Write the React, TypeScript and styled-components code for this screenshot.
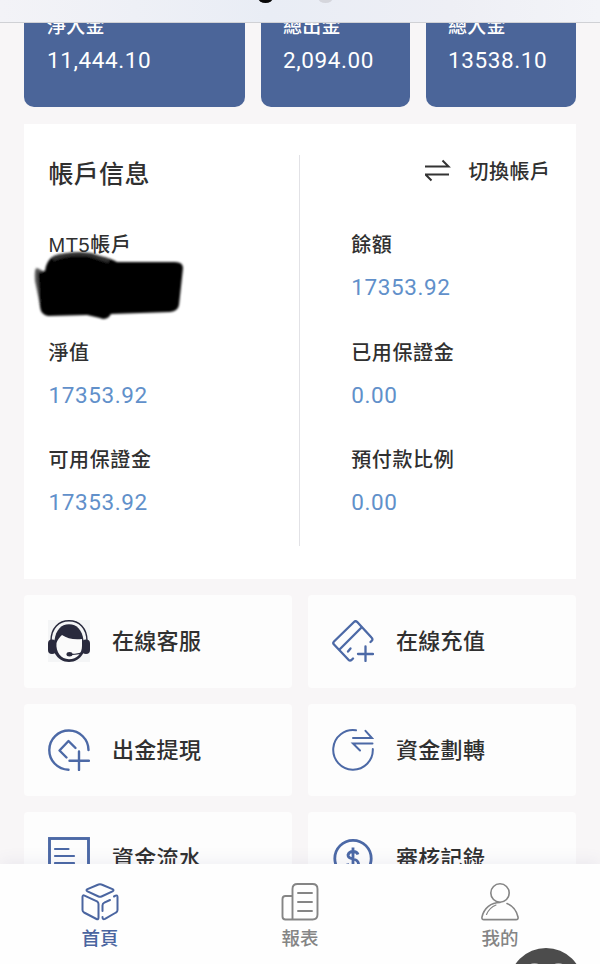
import React from "react";
import styled, { createGlobalStyle } from "styled-components";

const BLUE = "#4b6599";

const GlobalStyle = createGlobalStyle`
  * { box-sizing: border-box; }
  body { margin: 0; }
`;

const Screen = styled.div`
  width: 600px;
  height: 964px;
  display: flex;
  flex-direction: column;
  overflow: hidden;
  position: relative;
  background: #f8f6f7;
  color: #303030;
  font-family: "Liberation Sans", "Noto Sans CJK TC", sans-serif;
`;

const TopBar = styled.header`
  flex: 0 0 22.5px;
  display: flex;
  gap: 45px;
  padding-left: 258px;
  overflow: hidden;
  background: linear-gradient(90deg, #f3f3f7, #e9edf5 45%, #eeeff5 75%, #f3f4f8);
  border-bottom: 1px solid #d0d1d5;
`;

const TitleTail = styled.span<{ $color: string }>`
  width: 15px;
  height: 11px;
  margin-top: -8.5px;
  border-radius: 50%;
  background: ${(p) => p.$color};
`;

const Content = styled.main`
  flex: 1;
  min-height: 0;
  overflow: hidden;
  padding: 0 24px;
`;

const Stats = styled.section`
  display: grid;
  grid-template-columns: 221px 149px 150px;
  gap: 16px;
  height: 104px;
  margin-top: -19.5px;
  margin-bottom: 17px;
`;

const StatCard = styled.div`
  padding: 10px 0 0 23px;
  border-radius: 10px;
  background: ${BLUE};
  color: #fff;

  & + & {
    padding-left: 22px;
  }
`;

const StatLabel = styled.div`
  font-size: 19px;
  line-height: 28px;
  font-weight: 500;
  letter-spacing: 0.2px;
`;

const Amount = styled.div`
  font-family: Roboto, sans-serif;
  font-size: 22.5px;
  letter-spacing: 0.6px;
`;

const StatValue = styled(Amount)`
  margin-top: 5px;
  line-height: 28px;
`;

const Account = styled.section`
  display: flex;
  height: 455px;
  padding-top: 31px;
  background: #fff;
`;

const AccountColumn = styled.div<{ $side: "left" | "right" }>`
  width: ${(p) => (p.$side === "left" ? "275px" : "276px")};
  padding-left: ${(p) => (p.$side === "left" ? "24.5px" : "51px")};
`;

const Divider = styled.div`
  flex: 0 0 1.5px;
  height: 391px;
  background: #e2e2e6;
`;

const AccountTitle = styled.h1`
  margin: 0 0 36px;
  height: 37px;
  font-size: 25px;
  line-height: 38px;
  font-weight: 500;
  letter-spacing: 0.3px;
`;

const SwitchButton = styled.button`
  display: flex;
  align-items: center;
  justify-content: flex-end;
  gap: 18px;
  width: 100%;
  height: 30px;
  margin-bottom: 43px;
  padding: 0 25.5px 0 0;
  border: 0;
  background: none;
  color: inherit;
  font: inherit;
  font-size: 20px;
  font-weight: 500;
  letter-spacing: 0.5px;
`;

const Field = styled.div`
  position: relative;
  height: 107.5px;
`;

const FieldLabel = styled.div`
  font-size: 20px;
  line-height: 34px;
  font-weight: 500;
  letter-spacing: 0.6px;
`;

const FieldValue = styled(Amount)`
  margin-top: 9px;
  line-height: 32px;
  color: #6190ca;
`;

const Redaction = styled.svg`
  position: absolute;
  left: -24px;
  top: 21px;
  width: 160px;
  height: 76px;
  overflow: visible;
`;

const Menu = styled.section`
  display: grid;
  grid-template-columns: 1fr 1fr;
  grid-auto-rows: 92.5px;
  gap: 16px;
  margin-top: 16px;
`;

const MenuItem = styled.div`
  display: flex;
  align-items: center;
  gap: 22px;
  padding-left: 24px;
  border-radius: 4px;
  background: #fdfdfd;

  svg {
    flex: none;
  }
`;

const MenuLabel = styled.span`
  margin-bottom: 4px;
  font-size: 22px;
  font-weight: 500;
  letter-spacing: 0.3px;
`;

const Nav = styled.nav`
  flex: 0 0 100px;
  display: grid;
  grid-template-columns: repeat(3, 1fr);
  position: relative;
  background: #fefefe;
  box-shadow: 0 -4px 14px rgba(80, 90, 140, 0.07);
`;

const NavItem = styled.div<{ $active?: boolean }>`
  display: flex;
  flex-direction: column;
  align-items: center;
  padding-top: 18px;
  color: ${(p) => (p.$active ? "#4a65a0" : "#858585")};
  font-size: 18.5px;
  line-height: 28px;
  font-weight: 500;

  svg {
    margin-bottom: 3px;
  }
`;

const FloatingButton = styled.div`
  position: absolute;
  left: 509px;
  top: 948px;
  width: 74px;
  height: 74px;
  display: flex;
  justify-content: center;
  gap: 15px;
  padding-top: 15px;
  border-radius: 50%;
  background: #4c4c4c;
`;

const Glint = styled.span`
  width: 9px;
  height: 5px;
  border-radius: 50% 50% 0 0;
  background: #a5a5a5;
`;

const SwapIcon = () => (
  <svg width="26" height="24" viewBox="0 0 26 24" fill="none" stroke="#333" strokeWidth="2">
    <path d="M0 8.500H23.500L17.500 2.500M24 16.500H.5L6.500 22.500" />
  </svg>
);

const SupportIcon = () => (
  <svg width="42" height="42" viewBox="0 0 42 42">
    <rect width="42" height="42" fill="#f4f5f6" />
    <path d="M3 21C3 8 11 .8 21 .8S39 8 39 21" fill="none" stroke="#292a3d" strokeWidth="1.5" />
    <path d="M6.500 20C8 10 13 4.200 21 4.200S34 10 35.500 20v13C32 39 27 42 21 42S10 39 6.500 33Z" fill="#292a3d" />
    <path d="M8.500 23c1-3.500 3-5.500 5.500-8 5 3.500 12 5 20 4V26c0 7.500-5 13.200-13 13.200S7.500 32 8.500 23Z" fill="#fafafa" />
    <rect x="0" y="19.5" width="8" height="14.5" rx="4" fill="#292a3d" />
    <rect x="34" y="19.5" width="8" height="14.5" rx="4" fill="#292a3d" />
    <path d="M38 31c-4 2.500-9 3.500-16 3.500" fill="none" stroke="#292a3d" strokeWidth="1.3" />
    <ellipse cx="21.5" cy="34.300" rx="3" ry="2.200" fill="#292a3d" />
  </svg>
);

const DepositIcon = () => (
  <svg width="42" height="42" viewBox="0 0 42 42" fill="none" stroke="#4c69a6" strokeWidth="2.3" strokeLinecap="round" strokeLinejoin="round">
    <path d="M38.500 22L40 20.500Q41 19 39.500 17.500L25 1.800Q23.500 .5 22 2L2 21.500Q.5 23 2 24.500L16.500 39.800Q18 41 19.500 40L21 38.500" />
    <path d="M7.500 29.500L29 8M16 31.500L18.500 28.500" />
    <path d="M33.500 26.500V41M26 34H41" />
  </svg>
);

const WithdrawIcon = () => (
  <svg width="42" height="42" viewBox="0 0 42 42" fill="none" stroke="#4c69a6" strokeWidth="2.4" strokeLinecap="round" strokeLinejoin="round">
    <path d="M40.500 21A19.600 19.600 0 1 0 20.500 40.700" />
    <path d="M27.500 19L20.500 12 11.500 21.500 18.500 28.500" />
    <path d="M31 22.500V41M21.500 31.800H41" />
  </svg>
);

const TransferIcon = () => (
  <svg width="42" height="42" viewBox="0 0 42 42" fill="none" stroke="#4c69a6" strokeWidth="2" strokeLinecap="round">
    <path d="M24 1.300A19.800 19.800 0 1 0 40.800 20" />
    <path d="M21 9H40L33.500 1.800M40.500 14.500H21L28 21.500" />
  </svg>
);

const FlowIcon = () => (
  <svg width="42" height="42" viewBox="0 0 42 42" fill="none" stroke="#4c69a6" strokeWidth="2.9">
    <rect x="1.500" y="1.500" width="39" height="39" />
    <path d="M7 12H20.500M7 19H26M7 26H26M7 33H20" strokeLinecap="round" strokeWidth="2.2" />
  </svg>
);

const ReviewIcon = () => (
  <svg width="42" height="42" viewBox="0 0 42 42" fill="none" stroke="#4c69a6" strokeWidth="2.8">
    <circle cx="21" cy="21.500" r="18.200" />
    <path d="M26 17.500Q25 14.500 21 14.500T16 18Q16 21 21 22T26.500 26.500Q26 30 21 30T15.500 26.500M21 10.500V34" strokeWidth="2.8" />
  </svg>
);

const HomeIcon = () => (
  <svg width="38" height="40" viewBox="0 0 38 40" fill="none" stroke="currentColor" strokeWidth="2" strokeLinecap="round" strokeLinejoin="round">
    <path d="M17.500 2.500Q19 1.800 20.500 2.500L31.500 7.200Q33.500 8.200 31.500 9.400L20.500 14.500Q19 15.200 17.500 14.500L6.500 9.400Q4.500 8.200 6.500 7.200Z" />
    <path d="M3.500 13.600L16 19.300Q17.500 20.200 17.500 22V35.500Q17.500 38 15.500 37L3 30.500Q1.500 29.500 1.500 28V15Q1.500 12.700 3.500 13.600Z" />
    <path d="M33 14.500L34.500 13.700Q36.500 12.700 36.500 15V28Q36.500 29.700 35 30.500L24 36.800Q21.500 38 21.500 35M21.500 29V23.500Q21.500 21.500 23.300 20.700L29 18" />
  </svg>
);

const ReportIcon = () => (
  <svg width="38" height="40" viewBox="0 0 38 40" fill="none" stroke="currentColor" strokeWidth="1.900" strokeLinecap="round">
    <path d="M11.500 37.500V7Q11.500 2 16.500 2H31.500Q36.500 2 36.500 7V32.500Q36.500 37.500 31.500 37.500H4.500Q1.500 37.500 1.500 34.500V17Q1.500 14 4.500 14H11.500" />
    <path d="M17 11H31M17 20H31M17 29H31" />
  </svg>
);

const ProfileIcon = () => (
  <svg width="38" height="40" viewBox="0 0 38 40" fill="none" stroke="currentColor" strokeWidth="1.600" strokeLinecap="round" strokeLinejoin="round">
    <circle cx="19" cy="11" r="9.200" />
    <path d="M19 20.500C10 20.500 3 26 1 35Q.5 37.600 3 37.600H35Q37.500 37.600 37 35C35.500 28.500 32 24 26 21.500" />
    <path d="M5.500 32.500Q8.500 25.500 15 23" strokeWidth="1.200" />
  </svg>
);

const stats = [
  ["淨入金", "11,444.10"],
  ["總出金", "2,094.00"],
  ["總入金", "13538.10"],
];

const menu = [
  { label: "在線客服", Icon: SupportIcon },
  { label: "在線充值", Icon: DepositIcon },
  { label: "出金提現", Icon: WithdrawIcon },
  { label: "資金劃轉", Icon: TransferIcon },
  { label: "資金流水", Icon: FlowIcon },
  { label: "審核記錄", Icon: ReviewIcon },
];

const AccountField = ({ label, value }: { label: string; value: string }) => (
  <Field>
    <FieldLabel>{label}</FieldLabel>
    <FieldValue>{value}</FieldValue>
  </Field>
);

export default function App() {
  return (
    <Screen>
      <GlobalStyle />
      <TopBar>
        <TitleTail $color="#080808" />
        <TitleTail $color="#d5d6dc" />
      </TopBar>
      <Content>
        <Stats>
          {stats.map(([label, value]) => (
            <StatCard key={label}>
              <StatLabel>{label}</StatLabel>
              <StatValue>{value}</StatValue>
            </StatCard>
          ))}
        </Stats>
        <Account>
          <AccountColumn $side="left">
            <AccountTitle>帳戶信息</AccountTitle>
            <Field>
              <FieldLabel>MT5帳戶</FieldLabel>
              <Redaction viewBox="0 0 160 76">
                <defs>
                  <filter id="marker" x="-5%" y="-10%" width="110%" height="120%">
                    <feGaussianBlur stdDeviation="1.2" />
                  </filter>
                </defs>
                <g filter="url(#marker)">
                  <path d="M22 24L12 19Q9 19 10 32L15 56 24 60Z" fill="#555" />
                  <path d="M20 22C22 8 30 4 45 5C66 4 83 8 92 13L150 13Q158 13 158 19L154 56Q153 62 145 63L86 65Q82 72 75 69L62 66 23 67Q16 66 15 58L13 24Z" fill="#000" />
                  <path d="M28 10Q45 3 66 6L84 12" fill="none" stroke="#333" strokeWidth="4" />
                </g>
              </Redaction>
            </Field>
            <AccountField label="淨值" value="17353.92" />
            <AccountField label="可用保證金" value="17353.92" />
          </AccountColumn>
          <Divider />
          <AccountColumn $side="right">
            <SwitchButton>
              <SwapIcon />
              切換帳戶
            </SwitchButton>
            <AccountField label="餘額" value="17353.92" />
            <AccountField label="已用保證金" value="0.00" />
            <AccountField label="預付款比例" value="0.00" />
          </AccountColumn>
        </Account>
        <Menu>
          {menu.map(({ label, Icon }) => (
            <MenuItem key={label}>
              <Icon />
              <MenuLabel>{label}</MenuLabel>
            </MenuItem>
          ))}
        </Menu>
      </Content>
      <Nav>
        <NavItem $active>
          <HomeIcon />
          首頁
        </NavItem>
        <NavItem>
          <ReportIcon />
          報表
        </NavItem>
        <NavItem>
          <ProfileIcon />
          我的
        </NavItem>
      </Nav>
      <FloatingButton>
        <Glint />
        <Glint />
      </FloatingButton>
    </Screen>
  );
}
